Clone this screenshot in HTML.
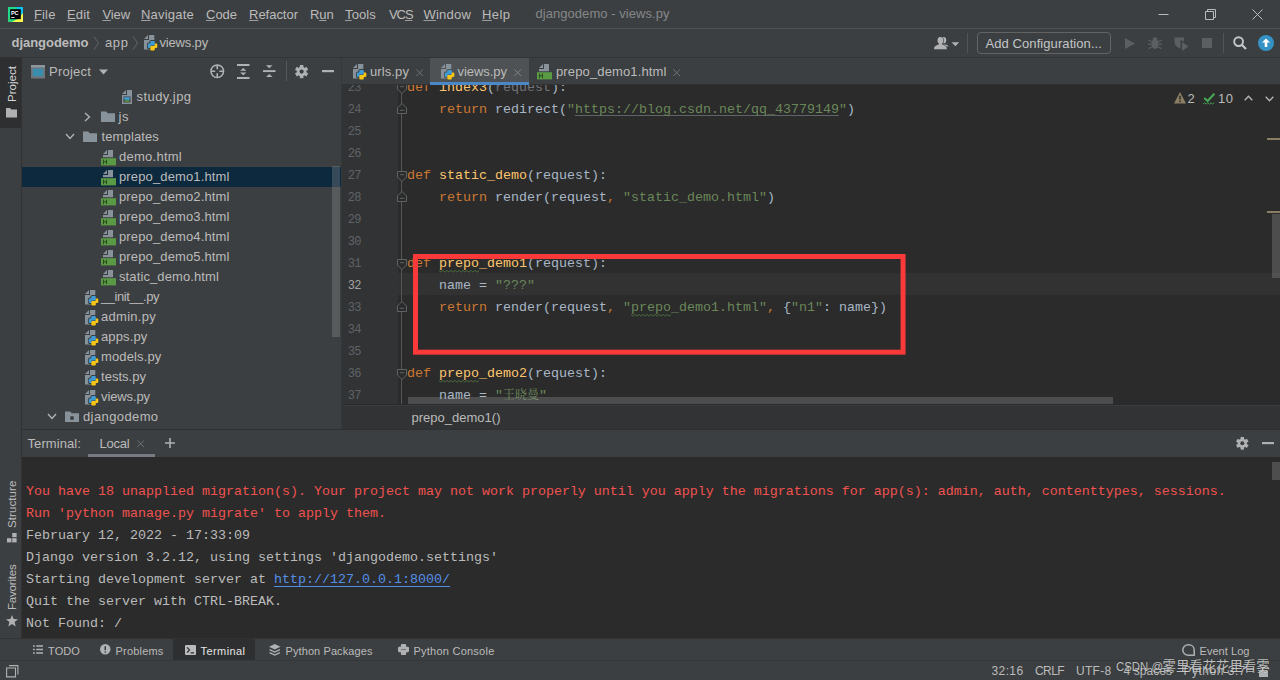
<!DOCTYPE html>
<html lang="en">
<head>
<meta charset="utf-8">
<title>djangodemo - views.py</title>
<style>
*{box-sizing:border-box;margin:0;padding:0}
html,body{width:1280px;height:680px;overflow:hidden;background:#3c3f41}
body{font-family:"Liberation Sans","Noto Sans CJK SC",sans-serif;font-size:13px;color:#bbbbbb;position:relative}
.abs{position:absolute}
svg{display:block;overflow:visible}
.t{position:absolute;white-space:pre;line-height:16px;height:16px}
u{text-decoration:underline;text-underline-offset:0.5px;text-decoration-thickness:1px;text-decoration-color:#9a9c9d}
#titlebar{left:0;top:0;width:1280px;height:28px;background:#3c3f41}
#navbar{left:0;top:28px;width:1280px;height:29px;background:#3c3f41;border-top:1px solid #4f5254}
#lstripe{left:0;top:57px;width:22px;height:582px;background:#3c3f41;border-right:1px solid #323232}
.vtext{position:absolute;transform-origin:0 0;transform:rotate(-90deg);white-space:pre;font-size:11px;line-height:12px;height:12px}
#proj{left:22px;top:57px;width:320px;height:373px;background:#3c3f41;overflow:hidden;border-right:1px solid #36393b}
.row{position:absolute;left:0;width:319px;height:20px}
.row.sel{background:#0d293e}
#tabs{left:342px;top:57px;width:938px;height:28px;background:#3c3f41;border-bottom:1px solid #323232}
#editor{left:342px;top:85px;width:938px;height:319.5px;background:#2b2b2b;overflow:hidden}
#gutter{left:0;top:0;width:56px;height:319px;background:#313335}
.ln{position:absolute;left:0;width:18.9px;text-align:right;font-family:"Liberation Mono",monospace;font-size:12px;letter-spacing:-0.6px;line-height:22px;height:22px;color:#606366;white-space:pre}
.cl{position:absolute;left:65px;font-family:"Liberation Mono","Noto Sans CJK SC",monospace;font-size:13.33px;line-height:22px;height:22px;white-space:pre;color:#a9b7c6}
.k{color:#cc7832}.f{color:#ffc66d}.s{color:#6a8759}.g{color:#72737a}
.cj{font-family:"Noto Serif CJK SC",serif;font-size:12px;line-height:0}
.lk{text-decoration:underline;text-underline-offset:2px;text-decoration-thickness:1px;text-decoration-color:#5f6467;text-decoration-skip-ink:none}
.wv{text-decoration:underline wavy rgba(79,138,60,0.75);text-decoration-thickness:0.7px;text-underline-offset:3.5px}
#crumbs{left:342px;top:404.5px;width:938px;height:25px;background:#313335;border-top:1px solid #393c3e}
#termhead{left:22px;top:429px;width:1258px;height:28px;background:#3c3f41;border-top:1.5px solid #2e3032}
#term{left:22px;top:457px;width:1258px;height:181px;background:#2b2b2b;overflow:hidden}
.tl{position:absolute;left:4px;font-family:"Liberation Mono",monospace;font-size:13.33px;line-height:22px;height:22px;white-space:pre;color:#bbbbbb}
.tl.r{color:#f0524f}
.tl .a{color:#548fe6;text-decoration:underline;text-underline-offset:3px;text-decoration-skip-ink:none;text-decoration-thickness:1px}
#btools{left:0;top:638px;width:1280px;height:22px;background:#3c3f41;border-top:1px solid #323232}
#status{left:0;top:660px;width:1280px;height:20px;background:#3c3f41;border-top:1px solid #35383a}
</style>
</head>
<body>
<div id="titlebar" class="abs"><svg class="abs" style="left:8px;top:6.5px;" width="15" height="15" viewBox="0 0 15 15"><rect x="0" y="0" width="15" height="15" fill="#21d789"/><path d="M8,0 H15 V9 Z" fill="#07c3f2"/><path d="M15,6 V15 H4 L11,11 Z" fill="#fcf84a"/><path d="M0,9 L4,15 H0 Z" fill="#2fd47a"/><rect x="2.1" y="2.2" width="10.7" height="10" fill="#000"/><text x="2.9" y="7.6" font-family="Liberation Sans,sans-serif" font-weight="bold" font-size="5.6" fill="#fff">PC</text><rect x="3.1" y="10.2" width="3.6" height="0.8" fill="#fff"/></svg><span class="t" style="left:34px;top:7px;letter-spacing:0.137px;"><u>F</u>ile</span><span class="t" style="left:67px;top:7px;letter-spacing:0.148px;"><u>E</u>dit</span><span class="t" style="left:102.5px;top:7px;letter-spacing:-0.113px;"><u>V</u>iew</span><span class="t" style="left:141px;top:7px;letter-spacing:0.211px;"><u>N</u>avigate</span><span class="t" style="left:206px;top:7px;letter-spacing:-0.020px;"><u>C</u>ode</span><span class="t" style="left:249px;top:7px;letter-spacing:-0.018px;"><u>R</u>efactor</span><span class="t" style="left:310px;top:7px;letter-spacing:-0.120px;">R<u>u</u>n</span><span class="t" style="left:345px;top:7px;letter-spacing:0.128px;"><u>T</u>ools</span><span class="t" style="left:389px;top:7px;letter-spacing:-1.078px;">VC<u>S</u></span><span class="t" style="left:423.5px;top:7px;letter-spacing:0.208px;"><u>W</u>indow</span><span class="t" style="left:482px;top:7px;letter-spacing:0.438px;"><u>H</u>elp</span><span class="t" style="left:535.5px;top:5.8px;color:#858788;letter-spacing:0.049px;">djangodemo - views.py</span><svg class="abs" style="left:1158px;top:9px;" width="110" height="11" viewBox="0 0 110 11"><path d="M0.5,5.5 H10.5" stroke="#b8babb" stroke-width="1" fill="none"/><path d="M47.5,2.5 H55.5 V10.5 H47.5 Z M49.5,2.5 V0.5 H57.5 V8.5 H55.5" stroke="#b8babb" stroke-width="1" fill="none"/><path d="M94.5,0.5 L104.5,10.5 M104.5,0.5 L94.5,10.5" stroke="#b8babb" stroke-width="1" fill="none"/></svg></div><div id="navbar" class="abs"><span class="t" style="left:11.5px;top:6px;font-weight:bold;letter-spacing:-0.028px;">djangodemo</span><svg class="abs" style="left:93px;top:7px;" width="7" height="14" viewBox="0 0 7 14"><path d="M1,0.5 L5.5,7 L1,13.5" fill="none" stroke="#626567" stroke-width="1"/></svg><span class="t" style="left:105px;top:6px;letter-spacing:0.599px;">app</span><svg class="abs" style="left:132px;top:7px;" width="7" height="14" viewBox="0 0 7 14"><path d="M1,0.5 L5.5,7 L1,13.5" fill="none" stroke="#626567" stroke-width="1"/></svg><svg class="abs" style="left:143px;top:5px;" width="16" height="17" viewBox="0 0 16 17"><path fill="#87929a" d="M6,1 H11.3 V15.5 H1 V6 H6 Z"/><path fill="#87929a" d="M5,1 V5 H1 Z"/><g transform="translate(4.8,7) scale(0.95)"><path fill="#3c3f41" stroke="#3c3f41" stroke-width="1.9" d="M3.6,0 H6.4 Q7.4,0 7.4,1 V3.8 Q7.4,4.8 6.4,4.8 H3.8 Q2.7,4.8 2.7,5.9 V7.4 H1 Q0,7.4 0,6.4 V3.6 Q0,2.6 1,2.6 H2.6 V1 Q2.6,0 3.6,0 Z"/><path fill="#3c3f41" stroke="#3c3f41" stroke-width="1.9" transform="rotate(180 5 5)" d="M3.6,0 H6.4 Q7.4,0 7.4,1 V3.8 Q7.4,4.8 6.4,4.8 H3.8 Q2.7,4.8 2.7,5.9 V7.4 H1 Q0,7.4 0,6.4 V3.6 Q0,2.6 1,2.6 H2.6 V1 Q2.6,0 3.6,0 Z"/><path fill="#3e9bd6" d="M3.6,0 H6.4 Q7.4,0 7.4,1 V3.8 Q7.4,4.8 6.4,4.8 H3.8 Q2.7,4.8 2.7,5.9 V7.4 H1 Q0,7.4 0,6.4 V3.6 Q0,2.6 1,2.6 H2.6 V1 Q2.6,0 3.6,0 Z"/><path fill="#f7c514" transform="rotate(180 5 5)" d="M3.6,0 H6.4 Q7.4,0 7.4,1 V3.8 Q7.4,4.8 6.4,4.8 H3.8 Q2.7,4.8 2.7,5.9 V7.4 H1 Q0,7.4 0,6.4 V3.6 Q0,2.6 1,2.6 H2.6 V1 Q2.6,0 3.6,0 Z"/></g></svg><span class="t" style="left:159.5px;top:6px;letter-spacing:-0.170px;">views.py</span><svg class="abs" style="left:934px;top:7.8px;" width="26" height="12.2" viewBox="0 0 26 12.2"><ellipse cx="9.6" cy="3.3" rx="2.6" ry="3.2" fill="#b0b2b3"/><path d="M7,8.6 C9,7.2 12,7 14.4,9 L14.2,9.6 H7 Z" fill="#b0b2b3"/><g stroke="#3c3f41" stroke-width="1.2" paint-order="stroke"><ellipse cx="6.4" cy="3.5" rx="2.9" ry="3.4" fill="#b0b2b3"/><path d="M0,12.2 C0,9 2.4,8.2 4.6,7.4 H8.2 C10.4,8.2 12.9,9 12.9,12.2 Z" fill="#b0b2b3"/></g><rect x="4.9" y="5.5" width="3" height="3" fill="#b0b2b3"/><path d="M17.6,5.3 H25.2 L21.4,9.2 Z" fill="#afb1b3"/></svg><div class="abs" style="left:967px;top:4px;width:1px;height:20px;background:#515456"></div><div class="abs" style="left:977px;top:3px;width:134px;height:21.5px;border:1px solid #616365;border-radius:4px"></div><span class="t" style="left:985.5px;top:6.6px;color:#c3c5c6;letter-spacing:0.080px;">Add Configuration...</span><svg class="abs" style="left:1125px;top:8.5px;" width="10" height="11" viewBox="0 0 10 11"><path d="M0,0 L10,5.5 L0,11 Z" fill="#5c5f61"/></svg><svg class="abs" style="left:1148px;top:7px;" width="14" height="14" viewBox="0 0 14 14"><ellipse cx="7" cy="8" rx="3.6" ry="5" fill="#5c5f61"/><path d="M4.6,3.4 C4.6,0.6 9.4,0.6 9.4,3.4 Z" fill="#5c5f61"/><path d="M0.5,4 L3.5,5.8 M13.5,4 L10.5,5.8 M0,8.2 H3.5 M14,8.2 H10.5 M0.8,12.8 L3.8,10.8 M13.2,12.8 L10.2,10.8" stroke="#5c5f61" stroke-width="1.2" fill="none"/></svg><svg class="abs" style="left:1174px;top:7.5px;" width="15" height="14" viewBox="0 0 15 14"><path d="M0.5,0.5 H10 V4.5 L6.5,3 V11.5 C3,10.5 0.5,8 0.5,4.5 Z" fill="#5c5f61"/><path d="M8,5 L14.5,9.5 L8,14 Z" fill="#5c5f61"/></svg><svg class="abs" style="left:1202px;top:9px;" width="10" height="10" viewBox="0 0 10 10"><rect x="0" y="0" width="10" height="10" fill="#5c5f61"/></svg><div class="abs" style="left:1223px;top:4px;width:1px;height:20px;background:#515456"></div><svg class="abs" style="left:1233px;top:7px;" width="14" height="14" viewBox="0 0 14 14"><circle cx="5.6" cy="5.6" r="4.4" fill="none" stroke="#c4c6c7" stroke-width="1.9"/><path d="M8.8,8.8 L13,13" stroke="#c4c6c7" stroke-width="2.2" fill="none"/></svg><svg class="abs" style="left:1257.5px;top:6px;" width="16" height="16" viewBox="0 0 16 16"><circle cx="8" cy="8" r="8" fill="#3592c4"/><path d="M8,3.5 L12,7.6 H9.3 V12 H6.7 V7.6 H4 Z" fill="#fff"/></svg></div><div id="lstripe" class="abs"><div class="abs" style="left:0;top:0;width:21px;height:71px;background:#2d2f30"></div><span class="vtext" style="left:5.800000000000001px;top:44.5px;color:#d4d5d6;font-size:11.5px;letter-spacing:0.029px">Project</span><svg class="abs" style="left:6px;top:50.5px;" width="11" height="9.5" viewBox="0 0 11 9.5"><path d="M0,0 H4 L5.3,1.6 H11 V9.5 H0 Z" fill="#afb1b3"/></svg><span class="vtext" style="left:5.800000000000001px;top:470.5px;color:#bbbbbb;font-size:11.5px;letter-spacing:0.092px">Structure</span><svg class="abs" style="left:6.5px;top:475.5px;" width="10" height="9.5" viewBox="0 0 10 9.5"><rect x="5.2" y="0" width="4.4" height="4.2" fill="#afb1b3"/><rect x="0" y="5.2" width="4.4" height="4.2" fill="#afb1b3"/><rect x="5.2" y="5.2" width="4.4" height="4.2" fill="#afb1b3"/></svg><span class="vtext" style="left:5.800000000000001px;top:552.5px;color:#bbbbbb;font-size:11.5px;letter-spacing:-0.200px">Favorites</span><svg class="abs" style="left:5.5px;top:558px;" width="12" height="11.5" viewBox="0 0 12 11.5"><path d="M6,0 L7.6,4 L12,4.3 L8.6,7.1 L9.7,11.4 L6,9 L2.3,11.4 L3.4,7.1 L0,4.3 L4.4,4 Z" fill="#afb1b3"/></svg></div><div id="proj" class="abs"><svg class="abs" style="left:9px;top:8px;" width="14" height="13.5" viewBox="0 0 14 13.5"><rect x="0" y="0" width="14" height="13.5" fill="#6f767b"/><rect x="0" y="0" width="14" height="2.4" fill="#8e979d"/><rect x="1.8" y="3.6" width="10.4" height="7.6" fill="#3b8dad"/></svg><span class="t" style="left:27px;top:6.5px;letter-spacing:0.219px;">Project</span><svg class="abs" style="left:77px;top:12px;" width="9" height="6" viewBox="0 0 9 6"><path d="M0,0.5 H9 L4.5,5.5 Z" fill="#afb1b3"/></svg><svg class="abs" style="left:188px;top:7px;" width="14.5" height="14.5" viewBox="0 0 14.5 14.5"><circle cx="7.25" cy="7.25" r="6.3" fill="none" stroke="#afb1b3" stroke-width="1.5"/><path d="M7.25,1 V5.2 M7.25,13.5 V9.3 M1,7.25 H5.2 M13.5,7.25 H9.3" stroke="#afb1b3" stroke-width="1.6" fill="none"/></svg><svg class="abs" style="left:215px;top:6.600000000000001px;" width="12.5" height="15" viewBox="0 0 12.5 15"><path d="M0,1 H12.5 M0,14 H12.5" stroke="#afb1b3" stroke-width="1.9" fill="none"/><path d="M6.25,4 L9.4,6.7 H3.1 Z M6.25,11.2 L9.4,8.5 H3.1 Z" fill="#afb1b3"/></svg><svg class="abs" style="left:241px;top:7px;" width="12.5" height="14" viewBox="0 0 12.5 14"><path d="M0,7.1 H12.5" stroke="#afb1b3" stroke-width="1.9" fill="none"/><path d="M6.25,4.2 L9.5,1.3 H3 Z M6.25,10 L9.5,12.9 H3 Z" fill="#afb1b3"/></svg><div class="abs" style="left:263.5px;top:4px;width:1px;height:20px;background:#555759"></div><svg class="abs" style="left:273.4px;top:7.700000000000003px;" width="13.2" height="13.2" viewBox="0 0 13.2 13.2"><g transform="translate(6.6,6.6)"><rect x="-1.78" y="-6.60" width="3.56" height="3.30" fill="#afb1b3" transform="rotate(0)"/><rect x="-1.78" y="-6.60" width="3.56" height="3.30" fill="#afb1b3" transform="rotate(60)"/><rect x="-1.78" y="-6.60" width="3.56" height="3.30" fill="#afb1b3" transform="rotate(120)"/><rect x="-1.78" y="-6.60" width="3.56" height="3.30" fill="#afb1b3" transform="rotate(180)"/><rect x="-1.78" y="-6.60" width="3.56" height="3.30" fill="#afb1b3" transform="rotate(240)"/><rect x="-1.78" y="-6.60" width="3.56" height="3.30" fill="#afb1b3" transform="rotate(300)"/><circle r="4.75" fill="#afb1b3"/><circle r="2.1" fill="#3c3f41"/></g></svg><svg class="abs" style="left:300px;top:13px;" width="12" height="2.2" viewBox="0 0 12 2.2"><rect width="12" height="2.2" fill="#afb1b3"/></svg><div class="row" style="top:30px"><svg class="abs" style="left:99.5px;top:3px;" width="10" height="14" viewBox="0 0 10 14"><path fill="#87929a" d="M5,0 H10 V14 H0 V5 H5 Z"/><path fill="#87929a" d="M4,0 V4 H0 Z"/><rect x="1.5" y="6.5" width="7" height="6" fill="#3c3f41"/><rect x="2.2" y="7.2" width="5.6" height="2.6" fill="#3e9bd6"/><path fill="#5a9a44" d="M2.2,11.8 L4.2,9.2 L5.6,10.6 L6.6,9.8 L7.8,11.8 Z"/></svg><span class="t" style="left:114.5px;top:1.8px;letter-spacing:0.436px;">study.jpg</span></div><div class="row" style="top:50px"><svg class="abs" style="left:62px;top:4.7px;" width="7" height="10" viewBox="0 0 7 10"><path d="M1,1 L5.5,5 L1,9" fill="none" stroke="#afb1b3" stroke-width="1.4"/></svg><svg class="abs" style="left:79px;top:4px;" width="14" height="11" viewBox="0 0 14 11"><path fill="#87929a" d="M0,0.5 H5.2 L6.7,2.2 H14 V11 H0 Z"/></svg><span class="t" style="left:96.5px;top:1.8px;letter-spacing:0.555px;">js</span></div><div class="row" style="top:70px"><svg class="abs" style="left:42.5px;top:6px;" width="10" height="7" viewBox="0 0 10 7"><path d="M1,1 L5,5.5 L9,1" fill="none" stroke="#afb1b3" stroke-width="1.4"/></svg><svg class="abs" style="left:61px;top:4px;" width="14" height="11" viewBox="0 0 14 11"><path fill="#87929a" d="M0,0.5 H5.2 L6.7,2.2 H14 V11 H0 Z"/></svg><span class="t" style="left:79.5px;top:1.8px;letter-spacing:0.125px;">templates</span></div><div class="row" style="top:90px"><svg class="abs" style="left:79px;top:3px;" width="15" height="16" viewBox="0 0 15 16"><path fill="#87929a" d="M7,0 H12 V7.2 H2 V5 H7 Z"/><path fill="#87929a" d="M6,0 V4 H2 Z"/><rect x="0" y="8.2" width="15" height="7.2" fill="#5a9a44"/><path fill="none" stroke="#2b4a22" stroke-width="1" d="M2.5,9.6 V14.1 M5.5,9.6 V14.1 M2.5,11.8 H5.5"/></svg><span class="t" style="left:97px;top:1.8px;letter-spacing:0.255px;">demo.html</span></div><div class="row sel" style="top:110px"><svg class="abs" style="left:79px;top:3px;" width="15" height="16" viewBox="0 0 15 16"><path fill="#87929a" d="M7,0 H12 V7.2 H2 V5 H7 Z"/><path fill="#87929a" d="M6,0 V4 H2 Z"/><rect x="0" y="8.2" width="15" height="7.2" fill="#5a9a44"/><path fill="none" stroke="#2b4a22" stroke-width="1" d="M2.5,9.6 V14.1 M5.5,9.6 V14.1 M2.5,11.8 H5.5"/></svg><span class="t" style="left:97px;top:1.8px;letter-spacing:0.131px;">prepo_demo1.html</span></div><div class="row" style="top:130px"><svg class="abs" style="left:79px;top:3px;" width="15" height="16" viewBox="0 0 15 16"><path fill="#87929a" d="M7,0 H12 V7.2 H2 V5 H7 Z"/><path fill="#87929a" d="M6,0 V4 H2 Z"/><rect x="0" y="8.2" width="15" height="7.2" fill="#5a9a44"/><path fill="none" stroke="#2b4a22" stroke-width="1" d="M2.5,9.6 V14.1 M5.5,9.6 V14.1 M2.5,11.8 H5.5"/></svg><span class="t" style="left:97px;top:1.8px;letter-spacing:0.131px;">prepo_demo2.html</span></div><div class="row" style="top:150px"><svg class="abs" style="left:79px;top:3px;" width="15" height="16" viewBox="0 0 15 16"><path fill="#87929a" d="M7,0 H12 V7.2 H2 V5 H7 Z"/><path fill="#87929a" d="M6,0 V4 H2 Z"/><rect x="0" y="8.2" width="15" height="7.2" fill="#5a9a44"/><path fill="none" stroke="#2b4a22" stroke-width="1" d="M2.5,9.6 V14.1 M5.5,9.6 V14.1 M2.5,11.8 H5.5"/></svg><span class="t" style="left:97px;top:1.8px;letter-spacing:0.131px;">prepo_demo3.html</span></div><div class="row" style="top:170px"><svg class="abs" style="left:79px;top:3px;" width="15" height="16" viewBox="0 0 15 16"><path fill="#87929a" d="M7,0 H12 V7.2 H2 V5 H7 Z"/><path fill="#87929a" d="M6,0 V4 H2 Z"/><rect x="0" y="8.2" width="15" height="7.2" fill="#5a9a44"/><path fill="none" stroke="#2b4a22" stroke-width="1" d="M2.5,9.6 V14.1 M5.5,9.6 V14.1 M2.5,11.8 H5.5"/></svg><span class="t" style="left:97px;top:1.8px;letter-spacing:0.131px;">prepo_demo4.html</span></div><div class="row" style="top:190px"><svg class="abs" style="left:79px;top:3px;" width="15" height="16" viewBox="0 0 15 16"><path fill="#87929a" d="M7,0 H12 V7.2 H2 V5 H7 Z"/><path fill="#87929a" d="M6,0 V4 H2 Z"/><rect x="0" y="8.2" width="15" height="7.2" fill="#5a9a44"/><path fill="none" stroke="#2b4a22" stroke-width="1" d="M2.5,9.6 V14.1 M5.5,9.6 V14.1 M2.5,11.8 H5.5"/></svg><span class="t" style="left:97px;top:1.8px;letter-spacing:0.131px;">prepo_demo5.html</span></div><div class="row" style="top:210px"><svg class="abs" style="left:79px;top:3px;" width="15" height="16" viewBox="0 0 15 16"><path fill="#87929a" d="M7,0 H12 V7.2 H2 V5 H7 Z"/><path fill="#87929a" d="M6,0 V4 H2 Z"/><rect x="0" y="8.2" width="15" height="7.2" fill="#5a9a44"/><path fill="none" stroke="#2b4a22" stroke-width="1" d="M2.5,9.6 V14.1 M5.5,9.6 V14.1 M2.5,11.8 H5.5"/></svg><span class="t" style="left:97px;top:1.8px;letter-spacing:0.108px;">static_demo.html</span></div><div class="row" style="top:230px"><svg class="abs" style="left:62px;top:2px;" width="16" height="17" viewBox="0 0 16 17"><path fill="#87929a" d="M6,1 H11.3 V15.5 H1 V6 H6 Z"/><path fill="#87929a" d="M5,1 V5 H1 Z"/><g transform="translate(4.8,7) scale(0.95)"><path fill="#3c3f41" stroke="#3c3f41" stroke-width="1.9" d="M3.6,0 H6.4 Q7.4,0 7.4,1 V3.8 Q7.4,4.8 6.4,4.8 H3.8 Q2.7,4.8 2.7,5.9 V7.4 H1 Q0,7.4 0,6.4 V3.6 Q0,2.6 1,2.6 H2.6 V1 Q2.6,0 3.6,0 Z"/><path fill="#3c3f41" stroke="#3c3f41" stroke-width="1.9" transform="rotate(180 5 5)" d="M3.6,0 H6.4 Q7.4,0 7.4,1 V3.8 Q7.4,4.8 6.4,4.8 H3.8 Q2.7,4.8 2.7,5.9 V7.4 H1 Q0,7.4 0,6.4 V3.6 Q0,2.6 1,2.6 H2.6 V1 Q2.6,0 3.6,0 Z"/><path fill="#3e9bd6" d="M3.6,0 H6.4 Q7.4,0 7.4,1 V3.8 Q7.4,4.8 6.4,4.8 H3.8 Q2.7,4.8 2.7,5.9 V7.4 H1 Q0,7.4 0,6.4 V3.6 Q0,2.6 1,2.6 H2.6 V1 Q2.6,0 3.6,0 Z"/><path fill="#f7c514" transform="rotate(180 5 5)" d="M3.6,0 H6.4 Q7.4,0 7.4,1 V3.8 Q7.4,4.8 6.4,4.8 H3.8 Q2.7,4.8 2.7,5.9 V7.4 H1 Q0,7.4 0,6.4 V3.6 Q0,2.6 1,2.6 H2.6 V1 Q2.6,0 3.6,0 Z"/></g></svg><span class="t" style="left:79px;top:1.8px;letter-spacing:-0.445px;">__init__.py</span></div><div class="row" style="top:250px"><svg class="abs" style="left:62px;top:2px;" width="16" height="17" viewBox="0 0 16 17"><path fill="#87929a" d="M6,1 H11.3 V15.5 H1 V6 H6 Z"/><path fill="#87929a" d="M5,1 V5 H1 Z"/><g transform="translate(4.8,7) scale(0.95)"><path fill="#3c3f41" stroke="#3c3f41" stroke-width="1.9" d="M3.6,0 H6.4 Q7.4,0 7.4,1 V3.8 Q7.4,4.8 6.4,4.8 H3.8 Q2.7,4.8 2.7,5.9 V7.4 H1 Q0,7.4 0,6.4 V3.6 Q0,2.6 1,2.6 H2.6 V1 Q2.6,0 3.6,0 Z"/><path fill="#3c3f41" stroke="#3c3f41" stroke-width="1.9" transform="rotate(180 5 5)" d="M3.6,0 H6.4 Q7.4,0 7.4,1 V3.8 Q7.4,4.8 6.4,4.8 H3.8 Q2.7,4.8 2.7,5.9 V7.4 H1 Q0,7.4 0,6.4 V3.6 Q0,2.6 1,2.6 H2.6 V1 Q2.6,0 3.6,0 Z"/><path fill="#3e9bd6" d="M3.6,0 H6.4 Q7.4,0 7.4,1 V3.8 Q7.4,4.8 6.4,4.8 H3.8 Q2.7,4.8 2.7,5.9 V7.4 H1 Q0,7.4 0,6.4 V3.6 Q0,2.6 1,2.6 H2.6 V1 Q2.6,0 3.6,0 Z"/><path fill="#f7c514" transform="rotate(180 5 5)" d="M3.6,0 H6.4 Q7.4,0 7.4,1 V3.8 Q7.4,4.8 6.4,4.8 H3.8 Q2.7,4.8 2.7,5.9 V7.4 H1 Q0,7.4 0,6.4 V3.6 Q0,2.6 1,2.6 H2.6 V1 Q2.6,0 3.6,0 Z"/></g></svg><span class="t" style="left:79px;top:1.8px;letter-spacing:0.281px;">admin.py</span></div><div class="row" style="top:270px"><svg class="abs" style="left:62px;top:2px;" width="16" height="17" viewBox="0 0 16 17"><path fill="#87929a" d="M6,1 H11.3 V15.5 H1 V6 H6 Z"/><path fill="#87929a" d="M5,1 V5 H1 Z"/><g transform="translate(4.8,7) scale(0.95)"><path fill="#3c3f41" stroke="#3c3f41" stroke-width="1.9" d="M3.6,0 H6.4 Q7.4,0 7.4,1 V3.8 Q7.4,4.8 6.4,4.8 H3.8 Q2.7,4.8 2.7,5.9 V7.4 H1 Q0,7.4 0,6.4 V3.6 Q0,2.6 1,2.6 H2.6 V1 Q2.6,0 3.6,0 Z"/><path fill="#3c3f41" stroke="#3c3f41" stroke-width="1.9" transform="rotate(180 5 5)" d="M3.6,0 H6.4 Q7.4,0 7.4,1 V3.8 Q7.4,4.8 6.4,4.8 H3.8 Q2.7,4.8 2.7,5.9 V7.4 H1 Q0,7.4 0,6.4 V3.6 Q0,2.6 1,2.6 H2.6 V1 Q2.6,0 3.6,0 Z"/><path fill="#3e9bd6" d="M3.6,0 H6.4 Q7.4,0 7.4,1 V3.8 Q7.4,4.8 6.4,4.8 H3.8 Q2.7,4.8 2.7,5.9 V7.4 H1 Q0,7.4 0,6.4 V3.6 Q0,2.6 1,2.6 H2.6 V1 Q2.6,0 3.6,0 Z"/><path fill="#f7c514" transform="rotate(180 5 5)" d="M3.6,0 H6.4 Q7.4,0 7.4,1 V3.8 Q7.4,4.8 6.4,4.8 H3.8 Q2.7,4.8 2.7,5.9 V7.4 H1 Q0,7.4 0,6.4 V3.6 Q0,2.6 1,2.6 H2.6 V1 Q2.6,0 3.6,0 Z"/></g></svg><span class="t" style="left:79px;top:1.8px;letter-spacing:0.136px;">apps.py</span></div><div class="row" style="top:290px"><svg class="abs" style="left:62px;top:2px;" width="16" height="17" viewBox="0 0 16 17"><path fill="#87929a" d="M6,1 H11.3 V15.5 H1 V6 H6 Z"/><path fill="#87929a" d="M5,1 V5 H1 Z"/><g transform="translate(4.8,7) scale(0.95)"><path fill="#3c3f41" stroke="#3c3f41" stroke-width="1.9" d="M3.6,0 H6.4 Q7.4,0 7.4,1 V3.8 Q7.4,4.8 6.4,4.8 H3.8 Q2.7,4.8 2.7,5.9 V7.4 H1 Q0,7.4 0,6.4 V3.6 Q0,2.6 1,2.6 H2.6 V1 Q2.6,0 3.6,0 Z"/><path fill="#3c3f41" stroke="#3c3f41" stroke-width="1.9" transform="rotate(180 5 5)" d="M3.6,0 H6.4 Q7.4,0 7.4,1 V3.8 Q7.4,4.8 6.4,4.8 H3.8 Q2.7,4.8 2.7,5.9 V7.4 H1 Q0,7.4 0,6.4 V3.6 Q0,2.6 1,2.6 H2.6 V1 Q2.6,0 3.6,0 Z"/><path fill="#3e9bd6" d="M3.6,0 H6.4 Q7.4,0 7.4,1 V3.8 Q7.4,4.8 6.4,4.8 H3.8 Q2.7,4.8 2.7,5.9 V7.4 H1 Q0,7.4 0,6.4 V3.6 Q0,2.6 1,2.6 H2.6 V1 Q2.6,0 3.6,0 Z"/><path fill="#f7c514" transform="rotate(180 5 5)" d="M3.6,0 H6.4 Q7.4,0 7.4,1 V3.8 Q7.4,4.8 6.4,4.8 H3.8 Q2.7,4.8 2.7,5.9 V7.4 H1 Q0,7.4 0,6.4 V3.6 Q0,2.6 1,2.6 H2.6 V1 Q2.6,0 3.6,0 Z"/></g></svg><span class="t" style="left:79px;top:1.8px;letter-spacing:0.139px;">models.py</span></div><div class="row" style="top:310px"><svg class="abs" style="left:62px;top:2px;" width="16" height="17" viewBox="0 0 16 17"><path fill="#87929a" d="M6,1 H11.3 V15.5 H1 V6 H6 Z"/><path fill="#87929a" d="M5,1 V5 H1 Z"/><g transform="translate(4.8,7) scale(0.95)"><path fill="#3c3f41" stroke="#3c3f41" stroke-width="1.9" d="M3.6,0 H6.4 Q7.4,0 7.4,1 V3.8 Q7.4,4.8 6.4,4.8 H3.8 Q2.7,4.8 2.7,5.9 V7.4 H1 Q0,7.4 0,6.4 V3.6 Q0,2.6 1,2.6 H2.6 V1 Q2.6,0 3.6,0 Z"/><path fill="#3c3f41" stroke="#3c3f41" stroke-width="1.9" transform="rotate(180 5 5)" d="M3.6,0 H6.4 Q7.4,0 7.4,1 V3.8 Q7.4,4.8 6.4,4.8 H3.8 Q2.7,4.8 2.7,5.9 V7.4 H1 Q0,7.4 0,6.4 V3.6 Q0,2.6 1,2.6 H2.6 V1 Q2.6,0 3.6,0 Z"/><path fill="#3e9bd6" d="M3.6,0 H6.4 Q7.4,0 7.4,1 V3.8 Q7.4,4.8 6.4,4.8 H3.8 Q2.7,4.8 2.7,5.9 V7.4 H1 Q0,7.4 0,6.4 V3.6 Q0,2.6 1,2.6 H2.6 V1 Q2.6,0 3.6,0 Z"/><path fill="#f7c514" transform="rotate(180 5 5)" d="M3.6,0 H6.4 Q7.4,0 7.4,1 V3.8 Q7.4,4.8 6.4,4.8 H3.8 Q2.7,4.8 2.7,5.9 V7.4 H1 Q0,7.4 0,6.4 V3.6 Q0,2.6 1,2.6 H2.6 V1 Q2.6,0 3.6,0 Z"/></g></svg><span class="t" style="left:79px;top:1.8px;letter-spacing:0.025px;">tests.py</span></div><div class="row" style="top:330px"><svg class="abs" style="left:62px;top:2px;" width="16" height="17" viewBox="0 0 16 17"><path fill="#87929a" d="M6,1 H11.3 V15.5 H1 V6 H6 Z"/><path fill="#87929a" d="M5,1 V5 H1 Z"/><g transform="translate(4.8,7) scale(0.95)"><path fill="#3c3f41" stroke="#3c3f41" stroke-width="1.9" d="M3.6,0 H6.4 Q7.4,0 7.4,1 V3.8 Q7.4,4.8 6.4,4.8 H3.8 Q2.7,4.8 2.7,5.9 V7.4 H1 Q0,7.4 0,6.4 V3.6 Q0,2.6 1,2.6 H2.6 V1 Q2.6,0 3.6,0 Z"/><path fill="#3c3f41" stroke="#3c3f41" stroke-width="1.9" transform="rotate(180 5 5)" d="M3.6,0 H6.4 Q7.4,0 7.4,1 V3.8 Q7.4,4.8 6.4,4.8 H3.8 Q2.7,4.8 2.7,5.9 V7.4 H1 Q0,7.4 0,6.4 V3.6 Q0,2.6 1,2.6 H2.6 V1 Q2.6,0 3.6,0 Z"/><path fill="#3e9bd6" d="M3.6,0 H6.4 Q7.4,0 7.4,1 V3.8 Q7.4,4.8 6.4,4.8 H3.8 Q2.7,4.8 2.7,5.9 V7.4 H1 Q0,7.4 0,6.4 V3.6 Q0,2.6 1,2.6 H2.6 V1 Q2.6,0 3.6,0 Z"/><path fill="#f7c514" transform="rotate(180 5 5)" d="M3.6,0 H6.4 Q7.4,0 7.4,1 V3.8 Q7.4,4.8 6.4,4.8 H3.8 Q2.7,4.8 2.7,5.9 V7.4 H1 Q0,7.4 0,6.4 V3.6 Q0,2.6 1,2.6 H2.6 V1 Q2.6,0 3.6,0 Z"/></g></svg><span class="t" style="left:79px;top:1.8px;letter-spacing:-0.107px;">views.py</span></div><div class="row" style="top:350px"><svg class="abs" style="left:24.5px;top:6px;" width="10" height="7" viewBox="0 0 10 7"><path d="M1,1 L5,5.5 L9,1" fill="none" stroke="#afb1b3" stroke-width="1.4"/></svg><svg class="abs" style="left:43px;top:4px;" width="14" height="11" viewBox="0 0 14 11"><path fill="#87929a" d="M0,0.5 H5.2 L6.7,2.2 H14 V11 H0 Z"/></svg><div class="abs" style="left:48.2px;top:9.2px;width:3.6px;height:3.6px;border-radius:2px;background:#3c3f41"></div><span class="t" style="left:61px;top:1.8px;letter-spacing:0.394px;">djangodemo</span></div><div class="abs" style="left:310px;top:109px;width:8px;height:171px;background:rgba(166,166,166,0.27)"></div></div><div id="tabs" class="abs"><div class="abs" style="left:88px;top:0;width:98.5px;height:28px;background:#4e5254"></div><div class="abs" style="left:88px;top:24.5px;width:98.5px;height:3.5px;background:#4a88c7"></div><svg class="abs" style="left:9.5px;top:6.25px;" width="16" height="17" viewBox="0 0 16 17"><path fill="#87929a" d="M6,1 H11.3 V15.5 H1 V6 H6 Z"/><path fill="#87929a" d="M5,1 V5 H1 Z"/><g transform="translate(4.8,7) scale(0.95)"><path fill="#3c3f41" stroke="#3c3f41" stroke-width="1.9" d="M3.6,0 H6.4 Q7.4,0 7.4,1 V3.8 Q7.4,4.8 6.4,4.8 H3.8 Q2.7,4.8 2.7,5.9 V7.4 H1 Q0,7.4 0,6.4 V3.6 Q0,2.6 1,2.6 H2.6 V1 Q2.6,0 3.6,0 Z"/><path fill="#3c3f41" stroke="#3c3f41" stroke-width="1.9" transform="rotate(180 5 5)" d="M3.6,0 H6.4 Q7.4,0 7.4,1 V3.8 Q7.4,4.8 6.4,4.8 H3.8 Q2.7,4.8 2.7,5.9 V7.4 H1 Q0,7.4 0,6.4 V3.6 Q0,2.6 1,2.6 H2.6 V1 Q2.6,0 3.6,0 Z"/><path fill="#3e9bd6" d="M3.6,0 H6.4 Q7.4,0 7.4,1 V3.8 Q7.4,4.8 6.4,4.8 H3.8 Q2.7,4.8 2.7,5.9 V7.4 H1 Q0,7.4 0,6.4 V3.6 Q0,2.6 1,2.6 H2.6 V1 Q2.6,0 3.6,0 Z"/><path fill="#f7c514" transform="rotate(180 5 5)" d="M3.6,0 H6.4 Q7.4,0 7.4,1 V3.8 Q7.4,4.8 6.4,4.8 H3.8 Q2.7,4.8 2.7,5.9 V7.4 H1 Q0,7.4 0,6.4 V3.6 Q0,2.6 1,2.6 H2.6 V1 Q2.6,0 3.6,0 Z"/></g></svg><span class="t" style="left:28px;top:6.75px;letter-spacing:0.100px;">urls.py</span><svg class="abs" style="left:74.3px;top:11.55px;" width="7.4" height="7.4" viewBox="0 0 7.4 7.4"><path d="M0.4,0.4 L7,7 M7,0.4 L0.4,7" stroke="#6e7174" stroke-width="1" fill="none"/></svg><svg class="abs" style="left:97.5px;top:6.25px;" width="16" height="17" viewBox="0 0 16 17"><path fill="#87929a" d="M6,1 H11.3 V15.5 H1 V6 H6 Z"/><path fill="#87929a" d="M5,1 V5 H1 Z"/><g transform="translate(4.8,7) scale(0.95)"><path fill="#4e5254" stroke="#4e5254" stroke-width="1.9" d="M3.6,0 H6.4 Q7.4,0 7.4,1 V3.8 Q7.4,4.8 6.4,4.8 H3.8 Q2.7,4.8 2.7,5.9 V7.4 H1 Q0,7.4 0,6.4 V3.6 Q0,2.6 1,2.6 H2.6 V1 Q2.6,0 3.6,0 Z"/><path fill="#4e5254" stroke="#4e5254" stroke-width="1.9" transform="rotate(180 5 5)" d="M3.6,0 H6.4 Q7.4,0 7.4,1 V3.8 Q7.4,4.8 6.4,4.8 H3.8 Q2.7,4.8 2.7,5.9 V7.4 H1 Q0,7.4 0,6.4 V3.6 Q0,2.6 1,2.6 H2.6 V1 Q2.6,0 3.6,0 Z"/><path fill="#3e9bd6" d="M3.6,0 H6.4 Q7.4,0 7.4,1 V3.8 Q7.4,4.8 6.4,4.8 H3.8 Q2.7,4.8 2.7,5.9 V7.4 H1 Q0,7.4 0,6.4 V3.6 Q0,2.6 1,2.6 H2.6 V1 Q2.6,0 3.6,0 Z"/><path fill="#f7c514" transform="rotate(180 5 5)" d="M3.6,0 H6.4 Q7.4,0 7.4,1 V3.8 Q7.4,4.8 6.4,4.8 H3.8 Q2.7,4.8 2.7,5.9 V7.4 H1 Q0,7.4 0,6.4 V3.6 Q0,2.6 1,2.6 H2.6 V1 Q2.6,0 3.6,0 Z"/></g></svg><span class="t" style="left:115.5px;top:6.75px;letter-spacing:-0.045px;">views.py</span><svg class="abs" style="left:171.8px;top:11.55px;" width="7.4" height="7.4" viewBox="0 0 7.4 7.4"><path d="M0.4,0.4 L7,7 M7,0.4 L0.4,7" stroke="#7f8385" stroke-width="1" fill="none"/></svg><svg class="abs" style="left:194.5px;top:6.75px;" width="15" height="16" viewBox="0 0 15 16"><path fill="#87929a" d="M7,0 H12 V7.2 H2 V5 H7 Z"/><path fill="#87929a" d="M6,0 V4 H2 Z"/><rect x="0" y="8.2" width="15" height="7.2" fill="#5a9a44"/><path fill="none" stroke="#2b4a22" stroke-width="1" d="M2.5,9.6 V14.1 M5.5,9.6 V14.1 M2.5,11.8 H5.5"/></svg><span class="t" style="left:214px;top:6.75px;letter-spacing:0.131px;">prepo_demo1.html</span><svg class="abs" style="left:331.3px;top:11.55px;" width="7.4" height="7.4" viewBox="0 0 7.4 7.4"><path d="M0.4,0.4 L7,7 M7,0.4 L0.4,7" stroke="#6e7174" stroke-width="1" fill="none"/></svg></div><div id="editor" class="abs"><div class="abs" style="left:0;top:188px;width:938px;height:22px;background:#323232"></div><div id="gutter" class="abs"></div><div class="abs" style="left:0;top:188px;width:56px;height:22px;background:#313335"></div><div class="abs" style="left:59px;top:0;width:1px;height:319px;background:#555555"></div><span class="ln" style="top:-8.5px;color:#606366">23</span><span class="ln" style="top:13.5px;color:#606366">24</span><span class="ln" style="top:35.5px;color:#606366">25</span><span class="ln" style="top:57.5px;color:#606366">26</span><span class="ln" style="top:79.5px;color:#606366">27</span><span class="ln" style="top:101.5px;color:#606366">28</span><span class="ln" style="top:123.5px;color:#606366">29</span><span class="ln" style="top:145.5px;color:#606366">30</span><span class="ln" style="top:167.5px;color:#606366">31</span><span class="ln" style="top:189.5px;color:#a4a3a3">32</span><span class="ln" style="top:211.5px;color:#606366">33</span><span class="ln" style="top:233.5px;color:#606366">34</span><span class="ln" style="top:255.5px;color:#606366">35</span><span class="ln" style="top:277.5px;color:#606366">36</span><span class="ln" style="top:299.5px;color:#606366">37</span><span class="cl" style="top:-8.5px"><span class="k">def </span><span class="f">index3</span>(<span class="g">request</span>):</span><span class="cl" style="top:13.5px">    <span class="k">return </span>redirect(<span class="s">&quot;<span class="lk">https://blog.csdn.net/qq_43779149</span>&quot;</span>)</span><span class="cl" style="top:79.5px"><span class="k">def </span><span class="f">static_demo</span>(request):</span><span class="cl" style="top:101.5px">    <span class="k">return </span>render(request<span class="k">, </span><span class="s">&quot;static_demo.html&quot;</span>)</span><span class="cl" style="top:167.5px"><span class="k">def </span><span class="f">prepo_demo1</span>(request):</span><span class="cl" style="top:189.5px">    name = <span class="s">&quot;???&quot;</span></span><span class="cl" style="top:211.5px">    <span class="k">return </span>render(request<span class="k">, </span><span class="s">&quot;prepo_demo1.html&quot;</span><span class="k">, </span>{<span class="s">&quot;n1&quot;</span>: name})</span><span class="cl" style="top:277.5px"><span class="k">def </span><span class="f">prepo_demo2</span>(request):</span><span class="cl" style="top:299.5px">    name = <span class="s">&quot;<span class="cj">王晓曼</span>&quot;</span></span><svg class="abs" style="left:97px;top:184.60000000000002px;" width="40" height="3" viewBox="0 0 40 3"><polyline points="0,0.4 2,2.2 4,0.4 6,2.2 8,0.4 10,2.2 12,0.4 14,2.2 16,0.4 18,2.2 20,0.4 22,2.2 24,0.4 26,2.2 28,0.4 30,2.2 32,0.4 34,2.2 36,0.4 38,2.2 40,0.4" fill="none" stroke="#5d8f4c" stroke-width="0.8" opacity="0.8"/></svg><svg class="abs" style="left:289px;top:228.60000000000002px;" width="40" height="3" viewBox="0 0 40 3"><polyline points="0,0.4 2,2.2 4,0.4 6,2.2 8,0.4 10,2.2 12,0.4 14,2.2 16,0.4 18,2.2 20,0.4 22,2.2 24,0.4 26,2.2 28,0.4 30,2.2 32,0.4 34,2.2 36,0.4 38,2.2 40,0.4" fill="none" stroke="#5d8f4c" stroke-width="0.8" opacity="0.8"/></svg><svg class="abs" style="left:97px;top:294.6px;" width="40" height="3" viewBox="0 0 40 3"><polyline points="0,0.4 2,2.2 4,0.4 6,2.2 8,0.4 10,2.2 12,0.4 14,2.2 16,0.4 18,2.2 20,0.4 22,2.2 24,0.4 26,2.2 28,0.4 30,2.2 32,0.4 34,2.2 36,0.4 38,2.2 40,0.4" fill="none" stroke="#5d8f4c" stroke-width="0.8" opacity="0.8"/></svg><svg class="abs" style="left:54.5px;top:-2.0px;" width="10" height="11" viewBox="0 0 10 11"><path d="M0.5,0.5 H9.5 V6 L5,10.5 L0.5,6 Z" fill="#2b2b2b" stroke="#606366" stroke-width="1"/><path d="M2.8,3.7 H7.2" stroke="#606366" stroke-width="1"/></svg><svg class="abs" style="left:54.5px;top:17.8px;" width="10" height="11" viewBox="0 0 10 11"><path d="M0.5,10.5 H9.5 V5 L5,0.5 L0.5,5 Z" fill="#2b2b2b" stroke="#606366" stroke-width="1"/><path d="M2.8,7.3 H7.2" stroke="#606366" stroke-width="1"/></svg><svg class="abs" style="left:54.5px;top:86.0px;" width="10" height="11" viewBox="0 0 10 11"><path d="M0.5,0.5 H9.5 V6 L5,10.5 L0.5,6 Z" fill="#2b2b2b" stroke="#606366" stroke-width="1"/><path d="M2.8,3.7 H7.2" stroke="#606366" stroke-width="1"/></svg><svg class="abs" style="left:54.5px;top:105.8px;" width="10" height="11" viewBox="0 0 10 11"><path d="M0.5,10.5 H9.5 V5 L5,0.5 L0.5,5 Z" fill="#2b2b2b" stroke="#606366" stroke-width="1"/><path d="M2.8,7.3 H7.2" stroke="#606366" stroke-width="1"/></svg><svg class="abs" style="left:54.5px;top:174.0px;" width="10" height="11" viewBox="0 0 10 11"><path d="M0.5,0.5 H9.5 V6 L5,10.5 L0.5,6 Z" fill="#2b2b2b" stroke="#606366" stroke-width="1"/><path d="M2.8,3.7 H7.2" stroke="#606366" stroke-width="1"/></svg><svg class="abs" style="left:54.5px;top:215.8px;" width="10" height="11" viewBox="0 0 10 11"><path d="M0.5,10.5 H9.5 V5 L5,0.5 L0.5,5 Z" fill="#2b2b2b" stroke="#606366" stroke-width="1"/><path d="M2.8,7.3 H7.2" stroke="#606366" stroke-width="1"/></svg><svg class="abs" style="left:54.5px;top:284.0px;" width="10" height="11" viewBox="0 0 10 11"><path d="M0.5,0.5 H9.5 V6 L5,10.5 L0.5,6 Z" fill="#2b2b2b" stroke="#606366" stroke-width="1"/><path d="M2.8,3.7 H7.2" stroke="#606366" stroke-width="1"/></svg><svg class="abs" style="left:831.5px;top:7px;" width="12" height="11.5" viewBox="0 0 12 11.5"><path d="M6,0 L12,11.5 H0 Z" fill="#8a7f63"/><path d="M6,3.8 V7.6 M6,8.6 V10.2" stroke="#2b2b2b" stroke-width="1.5"/></svg><span class="t" style="left:845.5px;top:5.5px;color:#bbbbbb;letter-spacing:0.766px;">2</span><svg class="abs" style="left:861px;top:8px;" width="13" height="12" viewBox="0 0 13 12"><path d="M1.2,5 L4.6,8 L11.4,0.8" fill="none" stroke="#45a653" stroke-width="2.2"/><path d="M0,11 L1.6,9.8 L3.2,11 L4.8,9.8 L6.4,11 L8,9.8 L9.6,11 L11.2,9.8" fill="none" stroke="#45a653" stroke-width="0.9"/></svg><span class="t" style="left:876px;top:5.5px;color:#bbbbbb;letter-spacing:0.516px;">10</span><svg class="abs" style="left:901.5px;top:10px;" width="9" height="6" viewBox="0 0 9 6"><path d="M0.7,5.3 L4.5,1.2 L8.3,5.3" fill="none" stroke="#b4b6b7" stroke-width="1.3"/></svg><svg class="abs" style="left:922.7px;top:10.5px;" width="9" height="6" viewBox="0 0 9 6"><path d="M0.7,0.7 L4.5,4.8 L8.3,0.7" fill="none" stroke="#b4b6b7" stroke-width="1.3"/></svg><div class="abs" style="left:925px;top:53px;width:13px;height:2.2px;background:#8a7f63"></div><div class="abs" style="left:925px;top:126px;width:13px;height:2.2px;background:#8a7f63"></div><div class="abs" style="left:930px;top:129px;width:8px;height:63.5px;background:rgba(166,166,166,0.28)"></div><div class="abs" style="left:66px;top:311.5px;width:705px;height:7.5px;background:rgba(166,166,166,0.28)"></div><svg class="abs" style="left:71px;top:169px;" width="492.6" height="100.7" viewBox="0 0 492.6 100.7"><rect x="2.5" y="2.5" width="487.6" height="95.7" fill="none" stroke="#fa3939" stroke-width="5"/></svg></div><div id="crumbs" class="abs"><span class="t" style="left:69.5px;top:4.1px;letter-spacing:0.008px;">prepo_demo1()</span></div><div id="termhead" class="abs"><span class="t" style="left:5.5px;top:5.5px;letter-spacing:0.083px;">Terminal:</span><span class="t" style="left:77.5px;top:5.5px;letter-spacing:-0.216px;">Local</span><svg class="abs" style="left:114.8px;top:10.3px;" width="7.4" height="7.4" viewBox="0 0 7.4 7.4"><path d="M0.4,0.4 L7,7 M7,0.4 L0.4,7" stroke="#6e7174" stroke-width="1" fill="none"/></svg><div class="abs" style="left:66px;top:23.5px;width:67px;height:3px;background:#747a80"></div><svg class="abs" style="left:143px;top:7.5px;" width="10" height="10" viewBox="0 0 10 10"><path d="M5,0 V10 M0,5 H10" stroke="#afb1b3" stroke-width="1.6" fill="none"/></svg><svg class="abs" style="left:1213.8px;top:6.5px;" width="12.6" height="12.6" viewBox="0 0 12.6 12.6"><g transform="translate(6.3,6.3)"><rect x="-1.70" y="-6.30" width="3.40" height="3.15" fill="#afb1b3" transform="rotate(0)"/><rect x="-1.70" y="-6.30" width="3.40" height="3.15" fill="#afb1b3" transform="rotate(60)"/><rect x="-1.70" y="-6.30" width="3.40" height="3.15" fill="#afb1b3" transform="rotate(120)"/><rect x="-1.70" y="-6.30" width="3.40" height="3.15" fill="#afb1b3" transform="rotate(180)"/><rect x="-1.70" y="-6.30" width="3.40" height="3.15" fill="#afb1b3" transform="rotate(240)"/><rect x="-1.70" y="-6.30" width="3.40" height="3.15" fill="#afb1b3" transform="rotate(300)"/><circle r="4.54" fill="#afb1b3"/><circle r="2.0" fill="#3c3f41"/></g></svg><svg class="abs" style="left:1240px;top:11.699999999999989px;" width="12" height="2.2" viewBox="0 0 12 2.2"><rect width="12" height="2.2" fill="#afb1b3"/></svg></div><div id="term" class="abs"><span class="tl r" style="top:24.19999999999999px">You have 18 unapplied migration(s). Your project may not work properly until you apply the migrations for app(s): admin, auth, contenttypes, sessions.</span><span class="tl r" style="top:46.19999999999999px">Run &#x27;python manage.py migrate&#x27; to apply them.</span><span class="tl " style="top:68.19999999999999px">February 12, 2022 - 17:33:09</span><span class="tl " style="top:90.19999999999999px">Django version 3.2.12, using settings &#x27;djangodemo.settings&#x27;</span><span class="tl " style="top:112.19999999999999px">Starting development server at <span class="a">http://127.0.0.1:8000/</span></span><span class="tl " style="top:134.2px">Quit the server with CTRL-BREAK.</span><span class="tl " style="top:156.2px">Not Found: /</span><div class="abs" style="left:1250px;top:5px;width:8px;height:18px;background:#4e4e4e"></div></div><div id="btools" class="abs"><div class="abs" style="left:173px;top:0;width:81.5px;height:21px;background:#2d2f30"></div><svg class="abs" style="left:33px;top:6.3px;" width="10" height="9" viewBox="0 0 10 9"><path d="M0,1 H1.8 M3.2,1 H10 M0,4.5 H1.8 M3.2,4.5 H10 M0,8 H1.8 M3.2,8 H10" stroke="#afb1b3" stroke-width="1.7" fill="none"/></svg><span class="t" style="left:48px;top:3.5px;font-size:11px;color:#bbbbbb;letter-spacing:0.105px;">TODO</span><svg class="abs" style="left:100px;top:5.3px;" width="10.5" height="10.5" viewBox="0 0 10.5 10.5"><circle cx="5.25" cy="5.25" r="5.25" fill="#afb1b3"/><path d="M5.25,2.2 V6.2 M5.25,7.4 V8.8" stroke="#3c3f41" stroke-width="1.5"/></svg><span class="t" style="left:115.5px;top:3.5px;font-size:11px;letter-spacing:0.191px;">Problems</span><svg class="abs" style="left:185px;top:5.8px;" width="11" height="10" viewBox="0 0 11 10"><rect width="11" height="10" rx="1" fill="#b9bbbc"/><path d="M2,2.4 L4.6,5 L2,7.6 M5.6,7.8 H9" stroke="#2d2f30" stroke-width="1.2" fill="none"/></svg><span class="t" style="left:200.5px;top:3.5px;font-size:11px;color:#e6e6e6;letter-spacing:0.428px;">Terminal</span><svg class="abs" style="left:268.5px;top:4.8px;" width="11.5" height="12" viewBox="0 0 11.5 12"><path d="M5.75,0 L11.5,2.8 L5.75,5.6 L0,2.8 Z" fill="#afb1b3"/><path d="M0.6,5.6 L5.75,8.1 L10.9,5.6 M0.6,8.6 L5.75,11.1 L10.9,8.6" stroke="#afb1b3" stroke-width="1.3" fill="none"/></svg><span class="t" style="left:285.5px;top:3.5px;font-size:11px;letter-spacing:0.092px;">Python Packages</span><svg class="abs" style="left:397.5px;top:5.0px;" width="11" height="11.5" viewBox="0 0 11 11.5"><g transform="scale(1.1)"><path fill="#afb1b3" d="M3.6,0 H6.4 Q7.4,0 7.4,1 V3.8 Q7.4,4.8 6.4,4.8 H3.8 Q2.7,4.8 2.7,5.9 V7.4 H1 Q0,7.4 0,6.4 V3.6 Q0,2.6 1,2.6 H2.6 V1 Q2.6,0 3.6,0 Z"/><path fill="#afb1b3" transform="rotate(180 5 5)" d="M3.6,0 H6.4 Q7.4,0 7.4,1 V3.8 Q7.4,4.8 6.4,4.8 H3.8 Q2.7,4.8 2.7,5.9 V7.4 H1 Q0,7.4 0,6.4 V3.6 Q0,2.6 1,2.6 H2.6 V1 Q2.6,0 3.6,0 Z"/></g></svg><span class="t" style="left:413.5px;top:3.5px;font-size:11px;letter-spacing:0.238px;">Python Console</span><svg class="abs" style="left:1182px;top:4.8px;" width="13" height="12" viewBox="0 0 13 12"><path d="M6.5,0.8 C9.8,0.8 12.2,3 12.2,6 V11.2 H6.5 C3.2,11.2 0.8,9 0.8,6 C0.8,3 3.2,0.8 6.5,0.8 Z" fill="none" stroke="#afb1b3" stroke-width="1.5"/></svg><span class="t" style="left:1199.5px;top:3.5px;font-size:11px;letter-spacing:0.050px;">Event Log</span></div><div id="status" class="abs"><svg class="abs" style="left:5.5px;top:4px;" width="12.5" height="12.5" viewBox="0 0 12.5 12.5"><path d="M3,0.6 H11.9 V9.5 M0.6,3 H9.5 V11.9 H0.6 Z" fill="none" stroke="#afb1b3" stroke-width="1.1"/></svg><span class="t" style="left:991.5px;top:2px;font-size:12px;letter-spacing:0.394px;">32:16</span><span class="t" style="left:1035px;top:2px;font-size:12px;letter-spacing:-0.586px;">CRLF</span><span class="t" style="left:1076px;top:2px;font-size:12px;letter-spacing:0.300px;">UTF-8</span><span class="t" style="left:1123.5px;top:2px;font-size:12px;letter-spacing:0.059px;">4 spaces</span><span class="t" style="left:1183.5px;top:2px;font-size:12px;letter-spacing:0.512px;">Python 3.7</span><svg class="abs" style="left:1258.5px;top:4.5px;" width="9" height="11" viewBox="0 0 9 11"><path d="M1.5,5 V3.2 C1.5,0 7.5,0 7.5,3.2" fill="none" stroke="#afb1b3" stroke-width="1.3" transform="translate(2.2,0) rotate(0)"/><rect x="0" y="5" width="9" height="6" fill="#afb1b3"/></svg></div><div class="abs" style="left:0;top:57px;width:1280px;height:1px;background:#323335"></div><span class="t" style="left:1115.5px;top:657px;font-size:13.4px;line-height:20px;height:20px;color:rgba(255,255,255,0.72);text-shadow:0 0 1px rgba(0,0,0,0.55)"><span style="display:inline-block;width:47px;white-space:pre"><span style="display:inline-block;transform:scaleX(0.850);transform-origin:0 50%">CSDN @</span></span>雾里看花花里看雾</span></body></html>
